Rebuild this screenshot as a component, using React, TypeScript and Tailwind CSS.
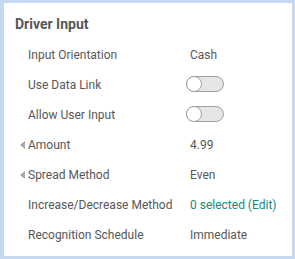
import React from 'react';

type Row = {
  label: string;
  value?: string;
  toggle?: boolean;
  caret?: boolean;
  link?: boolean;
};

const rows: Row[] = [
  { label: 'Input Orientation', value: 'Cash' },
  { label: 'Use Data Link', toggle: true },
  { label: 'Allow User Input', toggle: true },
  { label: 'Amount', value: '4.99', caret: true },
  { label: 'Spread Method', value: 'Even', caret: true },
  { label: 'Increase/Decrease Method', value: '0 selected (Edit)', link: true },
  { label: 'Recognition Schedule', value: 'Immediate' },
];

function Toggle() {
  return (
    <div className="relative h-[16px] w-[38px] rounded-full border border-[#a0a0a0] bg-[#e6e6e6]">
      <div className="absolute left-[-1px] top-[-1px] h-[16px] w-[16px] rounded-full border border-[#a0a0a0] bg-white" />
    </div>
  );
}

export default function App() {
  return (
    <div className="h-[259px] w-[295px] bg-[#c6d9f1] p-[3px]" style={{ fontFamily: 'Roboto, sans-serif' }}>
      <div className="h-[253px] w-[289px] border-l border-[#d4d4d4] bg-white pt-[11px]">
        <h2 className="pl-[11px] text-[14px] font-bold leading-[20px] text-[#575757]">Driver Input</h2>

        <div className="mt-[6px]">
          {rows.map(row => (
            <div key={row.label} className="flex h-[30px] items-center pl-[16px] text-[12px] text-[#575757]">
              <div className="flex w-[8px] items-center">
                {row.caret && (
                  <svg width="5" height="8" viewBox="0 0 5 8">
                    <path d="M5 0 L0 4 L5 8 Z" fill="#a8a8a8" />
                  </svg>
                )}
              </div>
              <div className="w-[162px]">{row.label}</div>
              {row.toggle ? (
                <div className="-ml-[4px] -mt-[3px]">
                  <Toggle />
                </div>
              ) : (
                <div className={row.link ? 'text-[#17897c]' : ''}>{row.value}</div>
              )}
            </div>
          ))}
        </div>
      </div>
    </div>
  );
}
